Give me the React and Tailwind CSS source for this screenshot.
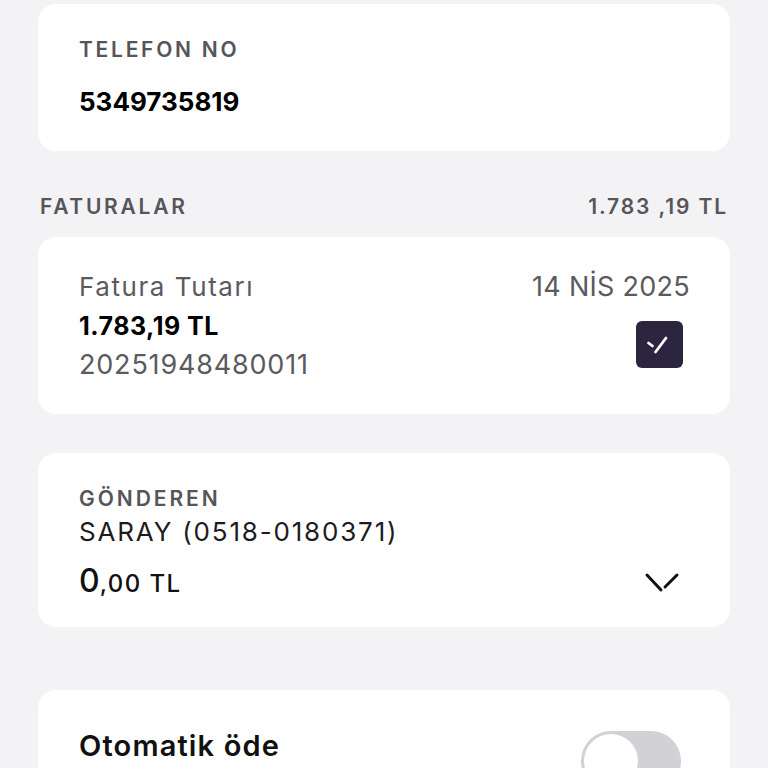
import React from 'react';

const font = { fontFamily: 'Inter, "Noto Sans", sans-serif' };

const Card = ({ className = '', children }) => (
  <div className={`bg-white rounded-[18px] ${className}`}>{children}</div>
);

const CheckBox = () => (
  <div className="w-[47px] h-[47px] rounded-[6px] bg-[#2b2540]">
    <svg width="47" height="47" viewBox="0 0 47 47" fill="none" stroke="white" strokeWidth="2.8" strokeLinecap="round">
      <path d="M12.5 22 L16.5 25" />
      <path d="M19.5 31 L30 17" />
    </svg>
  </div>
);

const Chevron = () => (
  <svg width="38" height="22" viewBox="0 0 38 22" fill="none" stroke="#111" strokeWidth="3" strokeLinecap="round">
    <path d="M3 4 L17 19" />
    <path d="M21 16 L33 4" />
  </svg>
);

export default function App() {
  return (
    <div style={font} className="h-[768px] overflow-hidden bg-[#f3f3f6] px-[38px] pt-[4px]">
      <Card className="h-[147px] px-[41px] pt-[34px]">
        <div className="text-[21px] leading-[24px] font-semibold tracking-[0.13em] text-[#55555a]">TELEFON NO</div>
        <div className="mt-[24px] text-[26px] leading-[32px] font-bold text-black">5349735819</div>
      </Card>

      <div className="flex items-center justify-between pl-[2px] pr-[2px] mt-[44px] h-[24px]">
        <span className="text-[21px] leading-[24px] font-semibold tracking-[0.13em] text-[#55555a]">FATURALAR</span>
        <span className="text-[21px] leading-[24px] font-semibold tracking-[0.09em] text-[#55555a]">1.783 ,19 TL</span>
      </div>

      <Card className="mt-[18px] h-[177px] pl-[41px] pr-[40px] pt-[34px] flex justify-between">
        <div>
          <div className="text-[26px] leading-[32px] tracking-[0.06em] text-[#5a5a5f]">Fatura Tutarı</div>
          <div className="mt-[8px] text-[25px] leading-[30px] font-bold text-black tracking-[0.02em]">1.783,19 TL</div>
          <div className="mt-[8px] text-[27px] leading-[32px] tracking-[0.03em] text-[#5a5a5f]">20251948480011</div>
        </div>
        <div className="flex flex-col items-end">
          <div className="text-[27px] leading-[32px] tracking-[0.01em] text-[#5a5a5f]">14 NİS 2025</div>
          <div className="mt-[18px] mr-[7px]"><CheckBox /></div>
        </div>
      </Card>

      <Card className="mt-[39px] h-[174px] pl-[41px] pr-[48px] pt-[34px]">
        <div className="text-[21px] leading-[24px] font-semibold tracking-[0.14em] text-[#55555a]">GÖNDEREN</div>
        <div className="mt-[5px] text-[26px] leading-[32px] tracking-[0.07em] text-[#1c1c1e]">SARAY (0518-0180371)</div>
        <div className="mt-[15px] flex items-start justify-between">
          <div className="flex items-baseline font-medium text-[#111]">
            <span className="text-[32px] leading-[36px]">0</span>
            <span className="text-[24px] tracking-[0.06em]">,00 TL</span>
          </div>
          <div className="mt-[8px]"><Chevron /></div>
        </div>
      </Card>

      <Card className="mt-[63px] h-[120px] pl-[41px] pr-[49px] pt-[39px] flex justify-between">
        <div className="text-[29px] leading-[34px] font-semibold tracking-[0.04em] text-[#111]">Otomatik öde</div>
        <div className="mt-[2px] w-[100px] h-[60px] rounded-full bg-[#d1d1d6] p-[2px] flex">
          <div className="w-[56px] h-[56px] rounded-full bg-white border border-[#cfcfd4]" />
        </div>
      </Card>
    </div>
  );
}
